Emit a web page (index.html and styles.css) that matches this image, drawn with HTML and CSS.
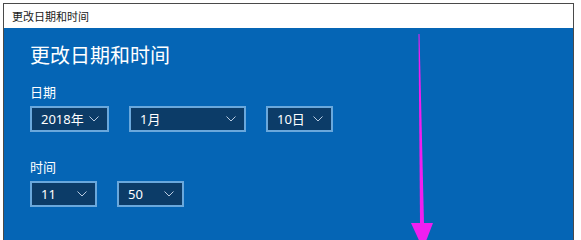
FILE: index.html
```html
<!DOCTYPE html>
<html lang="zh-CN">
<head>
<meta charset="utf-8">
<title>更改日期和时间</title>
<link rel="stylesheet" href="styles.css">
</head>
<body>
<div class="window">
  <div class="titlebar">更改日期和时间</div>
  <div class="content">
    <h1 class="heading">更改日期和时间</h1>
    <div class="label">日期</div>
    <div class="row">
      <div class="select w-year"><span>2018年</span><svg class="chev" width="10" height="6" viewBox="0 0 10 6"><polyline points="0.5,0.5 5,5 9.5,0.5"/></svg></div>
      <div class="select w-month"><span>1月</span><svg class="chev" width="10" height="6" viewBox="0 0 10 6"><polyline points="0.5,0.5 5,5 9.5,0.5"/></svg></div>
      <div class="select w-day"><span>10日</span><svg class="chev" width="10" height="6" viewBox="0 0 10 6"><polyline points="0.5,0.5 5,5 9.5,0.5"/></svg></div>
    </div>
    <div class="label label-time">时间</div>
    <div class="row">
      <div class="select w-small"><span>11</span><svg class="chev" width="10" height="6" viewBox="0 0 10 6"><polyline points="0.5,0.5 5,5 9.5,0.5"/></svg></div>
      <div class="select w-small"><span>50</span><svg class="chev" width="10" height="6" viewBox="0 0 10 6"><polyline points="0.5,0.5 5,5 9.5,0.5"/></svg></div>
    </div>
    <svg class="arrow" width="40" height="212" viewBox="0 0 40 212">
      <polygon points="13.5,0 14.5,0 19,190 15,190" fill="#f01ef0"/>
      <polygon points="6,189 28,189 18,215" fill="#f01ef0"/>
    </svg>
  </div>
</div>
</body>
</html>
```
FILE: styles.css
```css
html, body {
  margin: 0;
  padding: 0;
  background: #ffffff;
  overflow: hidden;
}
body {
  font-family: "Noto Sans", "Noto Sans CJK SC", sans-serif;
}
.window {
  margin: 3px 0 0 3px;
  width: 569px;
  height: 236px;
  border: 1px solid #4a4a4a;
  border-bottom: none;
  background: #0565b5;
  display: flex;
  flex-direction: column;
  overflow: hidden;
}
.titlebar {
  height: 24px;
  background: #ffffff;
  color: #1a1a1a;
  font-size: 11px;
  line-height: 24px;
  padding-left: 8px;
  font-family: "Noto Sans CJK SC", sans-serif;
}
.content {
  position: relative;
  flex: 1;
  padding: 13px 0 0 26px;
  color: #ffffff;
}
.heading {
  margin: 0;
  font-weight: normal;
  font-size: 20px;
  line-height: 28px;
  font-family: "Noto Sans CJK SC", sans-serif;
}
.label {
  margin-top: 14px;
  font-size: 13px;
  line-height: 18px;
  font-family: "Noto Sans CJK SC", sans-serif;
}
.label-time {
  margin-top: 26px;
}
.row {
  margin-top: 5px;
  display: flex;
  gap: 20px;
}
.select {
  box-sizing: border-box;
  height: 26px;
  border: 2px solid #6aa8dc;
  background: #0c3c68;
  display: flex;
  align-items: center;
  justify-content: space-between;
  padding: 0 8px 0 9px;
  font-size: 13px;
  color: #ffffff;
}
.select span {
  line-height: 20px;
}
.chev polyline {
  fill: none;
  stroke: #b9cbe0;
  stroke-width: 1;
}
.w-year { width: 79px; }
.w-month { width: 117px; }
.w-day { width: 67px; }
.w-small { width: 67px; }
.arrow {
  position: absolute;
  left: 401px;
  top: 6px;
}
```
